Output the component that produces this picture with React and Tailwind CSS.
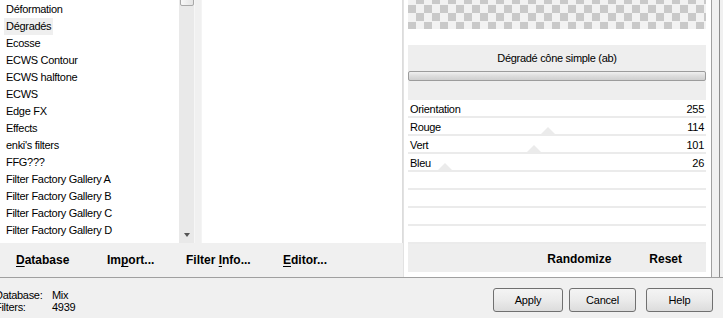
import React from "react";

const items = [
  "Déformation",
  "Dégradés",
  "Ecosse",
  "ECWS Contour",
  "ECWS halftone",
  "ECWS",
  "Edge FX",
  "Effects",
  "enki's filters",
  "FFG???",
  "Filter Factory Gallery A",
  "Filter Factory Gallery B",
  "Filter Factory Gallery C",
  "Filter Factory Gallery D",
  "Filter Factory Gallery E",
];

const params = [
  { name: "Orientation", value: "255", thumb: null },
  { name: "Rouge", value: "114", thumb: 133 },
  { name: "Vert", value: "101", thumb: 119 },
  { name: "Bleu", value: "26", thumb: 30 },
  null,
  null,
  null,
  null,
];

function Btn({ children, className }) {
  return (
    <div
      className={
        "h-[24px] flex items-center justify-center pt-[1px] rounded-[3px] border border-[#707070] bg-gradient-to-b from-[#f4f4f4] via-[#ebebeb] to-[#dcdcdc] text-[11px] tracking-[-0.2px] text-black " +
        className
      }
    >
      {children}
    </div>
  );
}

export default function App() {
  return (
    <div
      className="w-[723px] h-[318px] bg-[#f0f0f0] overflow-hidden text-black"
      style={{ fontFamily: '"Liberation Sans", Arial, sans-serif' }}
    >
      {/* main area */}
      <div className="flex h-[278px] border-b border-[#a0a0a0]">
        {/* left column */}
        <div className="w-[403px] flex flex-col">
          <div className="flex h-[243px]">
            {/* list */}
            <div className="w-[179px] bg-white overflow-hidden">
              <div className="mt-[1px]">
                {items.map((it, i) => (
                  <div key={i} className="h-[17px] leading-[17px] pl-[4px] text-[11px] tracking-[-0.3px] whitespace-nowrap">
                    <span className={"inline-block px-[2px] " + (i === 1 ? "bg-[#efefef]" : "")}>{it}</span>
                  </div>
                ))}
              </div>
            </div>
            {/* scrollbar */}
            <div className="w-[16px] bg-[#e9e9e9] border-r border-[#f6f6f6] flex flex-col items-center justify-between">
              <div className="w-[14px] h-[7px] -mt-[1px] rounded-b-[2px] border border-[#a8a8a8] bg-gradient-to-r from-[#f8f8f8] to-[#e4e4e4]" />
              <div className="mb-[6px] w-0 h-0 border-l-[3px] border-r-[3px] border-t-[4px] border-l-transparent border-r-transparent border-t-[#555]" />
            </div>
            {/* gap */}
            <div className="w-[6px] bg-[#f0f0f0]" />
            {/* middle panel */}
            <div className="flex-1 bg-white border-l border-[#f4f4f4] border-r border-r-[#dcdcdc]" />
          </div>
          {/* button bar */}
          <div className="flex-1 flex items-start pt-[8px] text-[12px] font-bold">
            <div className="w-[107px] pl-[16px]">
              <span className="underline underline-offset-[2px] decoration-1">D</span>atabase
            </div>
            <div className="w-[79px]">
              Im<span className="underline underline-offset-[2px] decoration-1">p</span>ort...
            </div>
            <div className="w-[97px]">
              Filter <span className="underline underline-offset-[2px] decoration-1">I</span>nfo...
            </div>
            <div>
              <span className="underline underline-offset-[2px] decoration-1">E</span>ditor...
            </div>
          </div>
        </div>

        {/* right panel */}
        <div className="w-[309px] bg-white border-l border-[#e2e2e2] border-r border-r-[#a0a0a0] pl-[4px] pr-[5px] flex flex-col">
          <div className="h-[29px] bg-[conic-gradient(#c9c9c9_25%,#f2f2f2_0_50%,#c9c9c9_0_75%,#f2f2f2_0)] bg-[length:16px_17px] bg-[position:0_-4px]" />
          <div className="h-[16px]" />
          <div className="h-[55px] bg-[#eeeeee] flex flex-col">
            <div className="h-[26px] flex items-center justify-center text-[11px] tracking-[-0.3px]">
              Dégradé cône simple (ab)
            </div>
            <div className="h-[10px] rounded-[2px] border border-[#9c9c9c] bg-gradient-to-b from-[#f0f0f0] via-[#dddddd] to-[#cfcfcf]" />
          </div>
          <div className="flex flex-col">
            {params.map((p, i) => (
              <div key={i} className="relative h-[18px] border-b-2 border-[#ebebeb] flex items-center justify-between pt-[2px] px-[2px] text-[11px] tracking-[-0.3px]">
                {p && p.thumb !== null && (
                  <div
                    className="absolute bottom-0 w-0 h-0 border-l-[7px] border-r-[7px] border-b-[7px] border-l-transparent border-r-transparent border-b-[#ebebeb]"
                    style={{ left: p.thumb }}
                  />
                )}
                <span className="relative">{p ? p.name : ""}</span>
                <span className="relative">{p ? p.value : ""}</span>
              </div>
            ))}
          </div>
          <div className="h-[28px] bg-[#eeeeee] flex items-center justify-end pt-[1px] pr-[24px] text-[12px] font-bold">
            <span>Randomize</span>
            <span className="ml-[38px]">Reset</span>
          </div>
        </div>

        {/* right edge */}
        <div className="w-[7px]" />
        <div className="w-px bg-[#8c8c8c]" />
        <div className="flex-1" />
      </div>

      {/* status bar */}
      <div className="flex">
        <div className="pt-[11px] -ml-[5px] text-[11px] tracking-[-0.3px] leading-[12px]">
          <div className="flex">
            <span className="w-[57px]">Database:</span>
            <span>Mix</span>
          </div>
          <div className="flex">
            <span className="w-[57px]">Filters:</span>
            <span>4939</span>
          </div>
        </div>
        <div className="ml-auto flex pt-[10px] pr-[10px]">
          <Btn className="w-[70px]">Apply</Btn>
          <Btn className="w-[67px] ml-[6px]">Cancel</Btn>
          <Btn className="w-[67px] ml-[10px]">Help</Btn>
        </div>
      </div>
    </div>
  );
}
